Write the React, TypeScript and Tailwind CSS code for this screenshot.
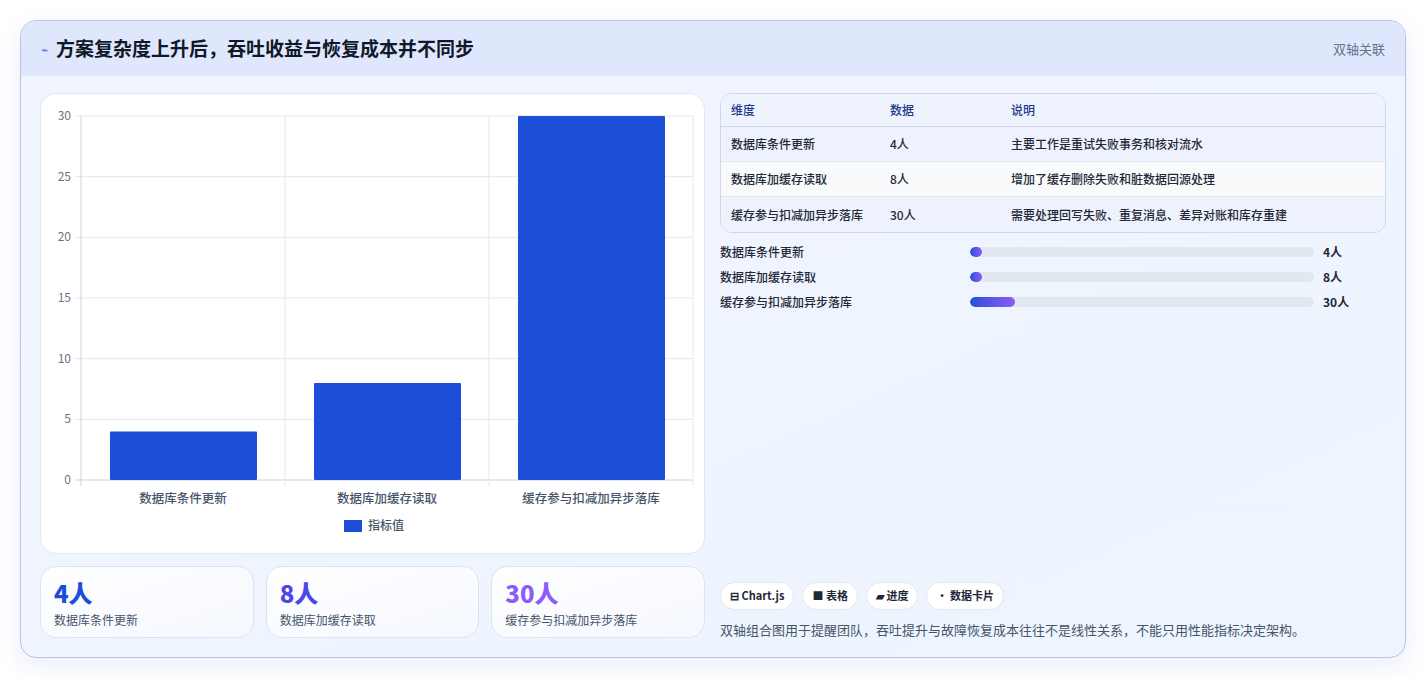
const font = { fontFamily: '"Noto Sans CJK SC", "Noto Sans", sans-serif' };

const rows = [
  { name: "数据库条件更新", val: "4人", note: "主要工作是重试失败事务和核对流水", w: "3.5%" },
  { name: "数据库加缓存读取", val: "8人", note: "增加了缓存删除失败和脏数据回源处理", w: "3.5%" },
  { name: "缓存参与扣减加异步落库", val: "30人", note: "需要处理回写失败、重复消息、差异对账和库存重建", w: "13%" },
];

function Chart() {
  const x0 = 40, x1 = 652, y0 = 22, y1 = 386;
  const sc = (y1 - y0) / 30;
  const vals = [4, 8, 30];
  const cw = (x1 - x0) / 3;
  return (
    <svg width="665" height="460" viewBox="0 0 665 460" className="block">
      {[0, 5, 10, 15, 20, 25, 30].map((t) => {
        const y = y1 - t * sc;
        return (
          <g key={t}>
            <line x1={x0 - 6} x2={x1} y1={y} y2={y} stroke={t === 0 ? "#cbd5e1" : "#e5e7eb"} />
            <text x={x0 - 10} y={y + 4} textAnchor="end" fontSize="12" fill="#64748b" style={font}>{t}</text>
          </g>
        );
      })}
      {[0, 1, 2, 3].map((i) => (
        <line key={i} x1={x0 + i * cw} x2={x0 + i * cw} y1={y0} y2={y1 + 6} stroke={i === 0 ? "#cbd5e1" : "#e5e7eb"} />
      ))}
      {vals.map((v, i) => (
        <rect key={i} x={x0 + i * cw + 29} width={147} y={y1 - v * sc} height={v * sc} fill="#1d4ed8" rx="1" />
      ))}
      {rows.map((r, i) => (
        <text key={i} x={x0 + i * cw + cw / 2} y={409} textAnchor="middle" fontSize="12.5" fontWeight="500" fill="#475569" style={font}>{r.name}</text>
      ))}
      <rect x={303} y={426} width={18} height={12} fill="#1d4ed8" />
      <text x={327} y={436} fontSize="12" fontWeight="500" fill="#475569" style={font}>指标值</text>
    </svg>
  );
}

export default function App() {
  return (
    <div className="w-[1426px] h-[678px] bg-white pt-5 px-5" style={font}>
      <div className="h-[638px] rounded-2xl border border-[#b9c3ea] overflow-hidden bg-gradient-to-br from-[#f0f4fe] to-[#eef5ff] shadow-[0_8px_24px_rgba(99,102,241,0.12)] flex flex-col">
        <div className="h-[55px] shrink-0 bg-[#dfe7fd] flex items-center justify-between px-5">
          <div className="flex items-center gap-2">
            <span className="text-[#4f6ef0] text-xs">⌁</span>
            <h1 className="text-[19px] font-bold text-[#111827]">方案复杂度上升后，吞吐收益与恢复成本并不同步</h1>
          </div>
          <span className="text-[13px] text-[#64748b]">双轴关联</span>
        </div>
        <div className="flex gap-[15px] px-[19px] pt-[17px]">
          <div className="w-[665px] flex flex-col gap-3">
            <div className="h-[461px] bg-white rounded-2xl border border-[#e2e8f0]">
              <Chart />
            </div>
            <div className="grid grid-cols-3 gap-3">
              {rows.map((r, i) => (
                <div key={i} className="h-[72px] rounded-2xl border border-[#dbe4f5] bg-gradient-to-br from-white to-[#f5f8ff] px-[13px] pt-3">
                  <div className={`text-[24px] leading-7 font-extrabold ${["text-[#1d4ed8]", "text-[#4f46e5]", "text-[#8b5cf6]"][i]}`}>{r.val}</div>
                  <div className="text-[12px] text-[#475569] mt-1">{r.name}</div>
                </div>
              ))}
            </div>
          </div>
          <div className="flex-1 flex flex-col h-[546px]">
            <div className="rounded-xl border border-[#cfd8ea] overflow-hidden text-[12px] font-medium">
              <div className="flex h-[33px] items-center bg-[#eef3fe] text-[#1e3a8a] border-b border-[#cfd8ea]">
                <div className="w-[169px] pl-[10px]">维度</div>
                <div className="w-[121px]">数据</div>
                <div>说明</div>
              </div>
              {rows.map((r, i) => (
                <div key={i} className={`flex h-[35px] items-center text-[#1f2937] ${i === 1 ? "bg-[#f8fafc]" : "bg-[#eef2fd]"} ${i < 2 ? "border-b border-[#e2e8f0]" : ""}`}>
                  <div className="w-[169px] pl-[10px]">{r.name}</div>
                  <div className="w-[121px]">{r.val}</div>
                  <div>{r.note}</div>
                </div>
              ))}
            </div>
            <div className="mt-[10px] flex flex-col gap-[7px]">
              {rows.map((r, i) => (
                <div key={i} className="flex items-center h-[18px] text-[12px] font-medium text-[#1f2937]">
                  <div className="w-[250px]">{r.name}</div>
                  <div className="w-[344px] h-[10px] rounded-full bg-[#e2e8f0] overflow-hidden">
                    <div className="h-full rounded-full bg-gradient-to-r from-[#1d4ed8] to-[#8b5cf6]" style={{ width: r.w }} />
                  </div>
                  <div className="ml-[9px] font-bold">{r.val}</div>
                </div>
              ))}
            </div>
            <div className="mt-auto">
              <div className="flex gap-2">
                {["⊟ Chart.js", "■ 表格", "▰ 进度", "• 数据卡片"].map((t) => (
                  <span key={t} className="h-7 px-[9px] flex items-center rounded-full bg-white border border-[#e2e8f0] text-[11px] font-bold text-[#1f2937]">{t}</span>
                ))}
              </div>
              <p className="mt-[10px] text-[13px] text-[#475569]">双轴组合图用于提醒团队，吞吐提升与故障恢复成本往往不是线性关系，不能只用性能指标决定架构。</p>
            </div>
          </div>
        </div>
      </div>
    </div>
  );
}
